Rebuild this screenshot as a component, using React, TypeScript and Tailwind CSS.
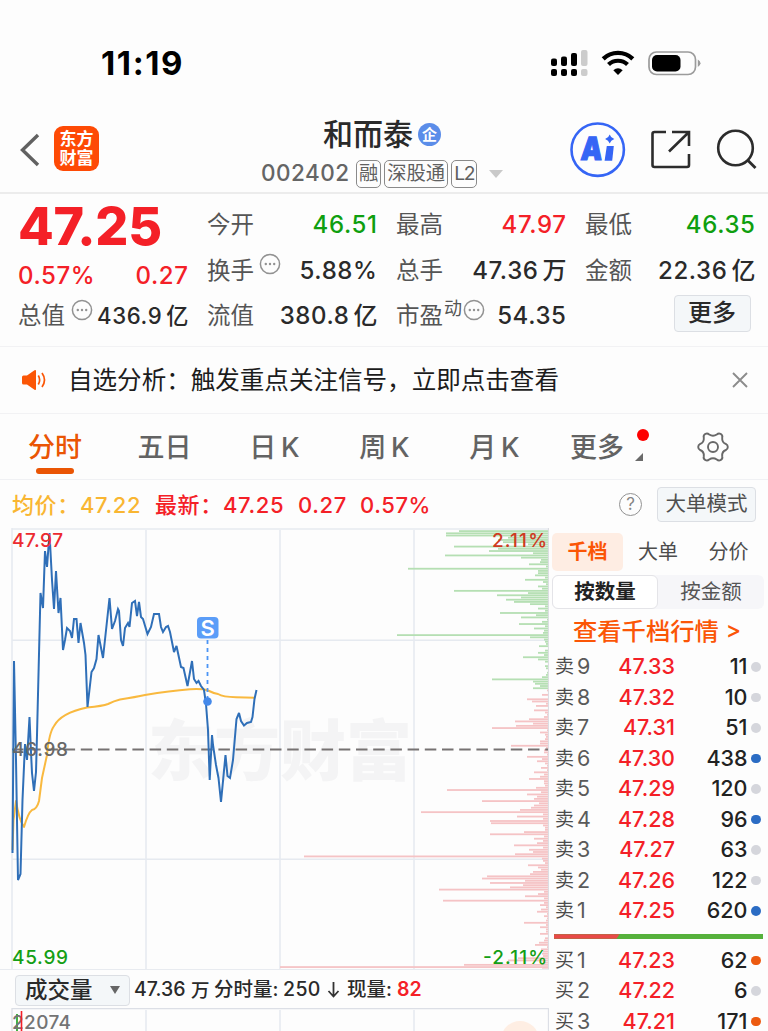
import type { ReactNode } from "react";

// bar lengths of the price distribution, one for each price step from the top
const DIST = [
  89, 102, 102, 40, 50, 45, 20, 94, 50, 59, 15, 103, 27, 7, 8, 19, 2, 140, 10, 10, 13, 3, 23, 5, 2,
  10, 6, 94, 20, 51, 27, 42, 34, 18, 3, 10, 3, 48, 12, 27, 1, 6, 29, 3, 14, 4, 5, 151, 18, 4, 3, 2,
  9, 0, 3, 10, 4, 25, 10, 3, 0, 3, 2, 0, 1, 2, 6, 56, 15, 13, 8, 15, 1, 0, 6, 0, 21, 16, 2, 12, 0,
  14, 3, 1, 4, 19, 33, 15, 32, 56, 1, 8, 3, 2, 3, 8, 8, 37, 2, 4, 4, 1, 21, 6, 11, 3, 1, 7, 1, 14,
  4, 8, 19, 4, 4, 3, 12, 101, 7, 21, 11, 14, 66, 9, 14, 17, 28, 127, 5, 31, 5, 58, 57, 5, 3, 3, 24,
  58, 4, 14, 5, 11, 34, 5, 19, 15, 33, 244, 6, 5, 3, 20, 10, 7, 15, 18, 61, 66, 23, 58, 25, 38, 109,
  4, 10, 23, 4, 105, 4, 8, 2, 7, 11, 1, 4, 1, 2, 24, 2, 8, 2, 2, 8, 0, 3, 4, 9, 13, 1, 7, 5, 6, 5,
  30, 40, 5, 84, 268, 6,
];
const GREEN_COUNT = 72;

const PRICE_LINE =
  "12.5,853 14,661 16,760 18,880 20.5,874 22.5,800 25,744 27,760 29.5,717 31,752 32,773 34,791 36,772 37,735 40.5,593 43,608 45,551 47,567 49.5,533 52,580 54,609 56,571 58.5,613 60.5,598 63,650 65,640 67,628 70,631 72,638 74,619 76.5,619 78.5,643 80.5,623 84,643 85.5,655 87.5,707 91.5,672 94,668 96.5,659 98.5,635 103,658 109.5,598 112,629 115,621 118,609 119,611 121,640 123,646 125,628 128,623 129.5,627 132,603 135,601 137,616 139,602 141,617 143,619 147.5,634 151,627 154,614 159,614 161,627 163,632 166,627 168,626 170,632 174,652 176.5,646 181,667 183.5,668 187.5,686 192,661 194,679 196.5,683 198.5,681 201,686 204,690 206,704 208,730 209.7,780 212,735 213,745 216,765 218.5,778 221,802 225.5,755 227.5,776 230,778 233,760 236.5,719 239,713 241,721 244,725.5 247,723 251,722 252.5,717 254.5,699 256.5,690";
const AVG_LINE =
  "M12.5 850L13.5 820L16 801Q19 820 24 827Q28 813 32 810Q37 809 39 801L42 778L47 755Q49 733 54 726Q61 713 87 707.5Q103 706 108 704Q114 701 120 699.5Q136 697 145 695Q170 691 190 689.3Q202 688.5 208 690.5Q214 693.5 218 694Q223 697 236 697.2L255 697.8";

type Level = { name: string; no: number; price: string; vol: number; dot: string };

const GREY = "bg-[#d5d6dc]";
const BLUE = "bg-[#2b6cc4]";
const ORANGE = "bg-[#ec5a10]";

const SELLS: Level[] = [
  { name: "卖", no: 9, price: "47.33", vol: 11, dot: GREY },
  { name: "卖", no: 8, price: "47.32", vol: 10, dot: GREY },
  { name: "卖", no: 7, price: "47.31", vol: 51, dot: GREY },
  { name: "卖", no: 6, price: "47.30", vol: 438, dot: BLUE },
  { name: "卖", no: 5, price: "47.29", vol: 120, dot: GREY },
  { name: "卖", no: 4, price: "47.28", vol: 96, dot: BLUE },
  { name: "卖", no: 3, price: "47.27", vol: 63, dot: GREY },
  { name: "卖", no: 2, price: "47.26", vol: 122, dot: GREY },
  { name: "卖", no: 1, price: "47.25", vol: 620, dot: BLUE },
];
const BUYS: Level[] = [
  { name: "买", no: 1, price: "47.23", vol: 62, dot: ORANGE },
  { name: "买", no: 2, price: "47.22", vol: 6, dot: GREY },
  { name: "买", no: 3, price: "47.21", vol: 171, dot: ORANGE },
];

const StatusBar = () => (
  <div className="flex h-[100px] shrink-0 items-center justify-between pt-[25px] pr-[67px] pl-[101px]">
    <span className="pt-px text-[33px] leading-none font-bold tracking-[1.6px] text-black">11:19</span>
    <svg width="152" height="30" viewBox="549 47 152 30" fill="none">
      <g fill="#000">
        <rect x="551" y="57.5" width="6" height="7.5" rx="2" />
        <rect x="561" y="55.5" width="6" height="9.5" rx="2" />
        <rect x="571" y="52" width="6" height="13" rx="2" />
        <rect x="551" y="68" width="6" height="7" rx="2" />
        <rect x="561" y="68" width="6" height="7" rx="2" />
        <rect x="571" y="68" width="6" height="7" rx="2" />
      </g>
      <rect x="581" y="49" width="6.5" height="16" rx="2" fill="#ccc" />
      <rect x="581" y="68" width="6.5" height="7" rx="2" fill="#ccc" />
      <path d="M603.2 57.8A21.5 21.5 0 0 1 632.8 57.8" stroke="#000" strokeWidth="4.4" />
      <path d="M608.5 63.6A13.7 13.7 0 0 1 627.5 63.6" stroke="#000" strokeWidth="4.2" />
      <path d="M613.3 69.2Q618 65.2 622.7 69.2L618 74Z" fill="#000" />
      <rect x="649" y="51" width="46.5" height="22.5" rx="7.5" stroke="#9b9b9b" strokeWidth="1.7" />
      <rect x="652" y="54" width="28.5" height="16.5" rx="5" fill="#000" />
      <path d="M697.8 58.5Q700.5 60 700.5 62.2Q700.5 64.5 697.8 66Z" fill="#9b9b9b" />
    </svg>
  </div>
);

const Tag = ({ children }: { children: ReactNode }) => (
  <span className="flex h-[28px] items-center rounded-[5px] border-[1.5px] border-[#8a8a8a] px-[2px] text-[19.3px] leading-none text-[#606060]">
    {children}
  </span>
);

const Header = () => (
  <div className="flex h-[94px] shrink-0 items-start border-b-2 border-[#ececec]">
    <svg className="mt-[32px] ml-[19px]" width="22" height="36" viewBox="0 0 22 36" fill="none">
      <path d="M19 3L3.5 18L19 33" stroke="#616161" strokeWidth="3.4" />
    </svg>
    <div className="mt-[26px] ml-[13px] flex size-[45px] flex-col items-center justify-center rounded-[9px] bg-[#fe4a05] text-[17px] leading-[19px] font-bold text-white">
      <span>东方</span>
      <span>财富</span>
    </div>
    <div className="ml-[162px] flex w-[250px] flex-col">
      <div className="mt-[18px] flex h-[32px] items-center pl-[62px]">
        <span className="text-[30px] leading-none font-medium whitespace-nowrap text-[#2a2a2a]">和而泰</span>
        <span className="ml-[5px] flex size-[23px] items-center justify-center rounded-full bg-[#5b8de9] text-[15px] leading-none font-bold text-white">
          企
        </span>
      </div>
      <div className="mt-[9px] flex h-[29px] items-center">
        <span className="w-[95px] text-[22.5px] leading-none font-medium tracking-[0.5px] text-[#656565]">002402</span>
        <Tag>融</Tag>
        <span className="w-[3px]" />
        <Tag>深股通</Tag>
        <span className="w-[3px]" />
        <Tag>
          <span className="tracking-[-1.3px]">L2</span>
        </Tag>
        <svg className="ml-[12px]" width="14" height="8" viewBox="0 0 14 8">
          <path d="M0 0H14L7 8Z" fill="#c9c9c9" />
        </svg>
      </div>
    </div>
    <svg className="mt-[20px] ml-[58px]" width="198" height="60" viewBox="569 120 198 60" fill="none">
      <circle cx="597.7" cy="149.7" r="26.2" stroke="#3565f5" strokeWidth="2.6" />
      <text
        x="581"
        y="160.5"
        fontSize="32"
        fontWeight="900"
        fill="#3565f5"
        stroke="#3565f5"
        strokeWidth="1.2"
        transform="skewX(-4) translate(10.5 0)"
        textLength="21.5"
        lengthAdjust="spacingAndGlyphs"
      >
        A
      </text>
      <path d="M606.8 146H613.8L612.2 160.8H604.6Z" fill="#3565f5" />
      <path d="M609.7 134.5Q610.8 138 614.3 139Q610.8 140 609.7 143.5Q608.6 140 605.1 139Q608.6 138 609.7 134.5Z" fill="#3565f5" />
      <path d="M666 132H654.5Q652.5 132 652.5 134V165Q652.5 167 654.5 167H687Q689 167 689 165V154M672 132H689V146M689 132L669 151.5" stroke="#2c2c2c" strokeWidth="2.6" />
      <circle cx="735.5" cy="148" r="17.3" stroke="#2c2c2c" strokeWidth="2.6" />
      <path d="M747.5 160L755.5 168" stroke="#2c2c2c" strokeWidth="2.8" />
    </svg>
  </div>
);

const Dots = () => (
  <svg width="22" height="22" viewBox="0 0 22 22" fill="none" className="-mt-[13px] shrink-0">
    <circle cx="11" cy="11" r="9.6" stroke="#929292" strokeWidth="1.5" />
    <g fill="#929292">
      <circle cx="6.8" cy="11" r="1.2" />
      <circle cx="11" cy="11" r="1.2" />
      <circle cx="15.2" cy="11" r="1.2" />
    </g>
  </svg>
);

type CellProps = { label: ReactNode; value: string; unit?: string; color?: string; size?: string };

const Cell = ({ label, value, unit, color = "text-[#2a2a2a]", size = "text-[24px]" }: CellProps) => (
  <div className="flex h-[45.7px] items-center justify-between whitespace-nowrap">
    <span className="flex items-center text-[23.5px] leading-none text-[#555]">{label}</span>
    <span className={`flex leading-none font-medium tracking-[0.6px] ${size} ${color}`}>
      {value}
      {unit && <span className="ml-[4px] tracking-normal">{unit}</span>}
    </span>
  </div>
);

const Quote = () => (
  <div className="flex h-[153px] shrink-0 gap-[18.5px] border-b-[1.5px] border-[#f2f2f4] pt-[8px] pl-[18px]">
    <div className="w-[170.5px]">
      <div className="flex h-[49px] items-center text-[52px] leading-none font-extrabold tracking-[-0.3px] text-[#f42027]">
        47.25
      </div>
      <div className="flex h-[42.4px] items-center justify-between pt-[8px] text-[24px] leading-none font-medium tracking-[0.6px] text-[#f42027]">
        <span>0.57%</span>
        <span>0.27</span>
      </div>
      <Cell label={<>总值<span className="w-[6px]" /><Dots /></>} value="436.9" unit="亿" size="text-[22.2px]" />
    </div>
    <div className="w-[170.5px]">
      <Cell label="今开" value="46.51" color="text-[#0f9f0f]" />
      <Cell label={<>换手<span className="w-[5px]" /><Dots /></>} value="5.88%" />
      <Cell label="流值" value="380.8" unit="亿" />
    </div>
    <div className="w-[170.5px]">
      <Cell label="最高" value="47.97" color="text-[#f42027]" />
      <Cell label="总手" value="47.36" unit="万" />
      <Cell label={<>市盈<span className="-mt-[14px] mr-px ml-px text-[18px]">动</span><Dots /></>} value="54.35" />
    </div>
    <div className="w-[170.5px]">
      <Cell label="最低" value="46.35" color="text-[#0f9f0f]" />
      <Cell label="金额" value="22.36" unit="亿" />
      <div className="flex h-[40px] items-center justify-end pr-[5px]">
        <button className="h-[37px] w-[77px] rounded-[4px] border border-[#dcdfe4] bg-[#f4f7f9] text-[24px] leading-none font-medium text-[#2a2a2a]">
          更多
        </button>
      </div>
    </div>
  </div>
);

const Notice = () => (
  <div className="flex h-[67px] shrink-0 items-center border-b-[1.5px] border-[#f2f2f4] pr-[19px] pl-[21px]">
    <svg width="26" height="22" viewBox="0 0 26 22" fill="none">
      <path d="M1 8Q1 6.5 2.5 6.5H6L13.5 1.2Q15 .5 15 2V20Q15 21.5 13.5 20.7L6 15.5H2.5Q1 15.5 1 14Z" fill="#fb5606" />
      <path d="M17.3 6.5Q20 11 17.3 15.5M21 4Q26 11 21 18" stroke="#fb5606" strokeWidth="1.7" />
    </svg>
    <span className="ml-[21px] pt-px text-[24.55px] leading-none whitespace-nowrap text-[#1c1c1c]">
      自选分析：触发重点关注信号，立即点击查看
    </span>
    <svg className="ml-auto" width="18" height="18" viewBox="0 0 18 18">
      <path d="M2 2L16 16M16 2L2 16" stroke="#8c8c8c" strokeWidth="1.9" />
    </svg>
  </div>
);

const Tabs = () => (
  <div className="flex h-[66px] shrink-0 items-center border-b-[1.5px] border-[#f0f1f4] pt-px text-[27px] leading-none font-medium whitespace-nowrap text-[#636363]">
    <div className="flex w-[110px] flex-col items-center pt-[14px] text-[#ea5504]">
      分时
      <span className="mt-[6.5px] h-[6px] w-[38px] rounded-full bg-[#ea5504]" />
    </div>
    <div className="w-[109px] pt-px text-center">五日</div>
    <div className="w-[111px] pt-px text-center [word-spacing:-2.5px]">日 K</div>
    <div className="w-[109px] pt-px text-center [word-spacing:-2.5px]">周 K</div>
    <div className="w-[111px] pt-px text-center [word-spacing:-2.5px]">月 K</div>
    <div className="flex w-[146px] items-center pt-px pl-[20px]">
      更多
      <svg className="-mt-[3px] ml-[10px]" width="18" height="36" viewBox="0 0 18 36">
        <circle cx="9" cy="7" r="6" fill="#fd0101" />
        <path d="M9 25V33H1Z" fill="#6a6a6a" />
      </svg>
    </div>
    <svg width="34" height="34" viewBox="-17 -17 34 34" fill="none" stroke="#686868" strokeWidth="1.9">
      <path
        d="M-7.5 -13.2Q-5.5 -14 -3.8 -12.5Q0 -10 3.8 -12.5Q5.5 -14 7.5 -13.2Q10 -11.7 9.2 -9.2Q8.8 -4.4 13 -3Q14.8 -2 14.8 0Q14.8 2 13 3Q8.8 4.4 9.2 9.2Q10 11.7 7.5 13.2Q5.5 14 3.8 12.5Q0 10 -3.8 12.5Q-5.5 14 -7.5 13.2Q-10 11.7 -9.2 9.2Q-8.8 4.4 -13 3Q-14.8 2 -14.8 0Q-14.8 -2 -13 -3Q-8.8 -4.4 -9.2 -9.2Q-10 -11.7 -7.5 -13.2Z"
        strokeLinejoin="round"
      />
      <circle r="5" />
    </svg>
  </div>
);

const InfoRow = () => (
  <div className="flex h-[48px] shrink-0 items-center pt-px pr-[12px] pl-[12px] text-[22px] leading-none font-medium tracking-[0.6px] whitespace-nowrap text-[#f42027]">
    <span className="w-[68px] text-[#f9b632]">均价：</span>
    <span className="w-[75px] text-[#f9b632]">47.22</span>
    <span className="w-[68px]">最新：</span>
    <span className="w-[75px]">47.25</span>
    <span className="w-[62px]">0.27</span>
    <span>0.57%</span>
    <span className="ml-auto flex size-[23px] items-center justify-center rounded-full border-[1.5px] border-[#929292] text-[17px] font-normal tracking-normal text-[#858585]">
      ?
    </span>
    <button className="ml-[15px] h-[35px] w-[99px] rounded-[4px] border border-[#dcdfe4] bg-[#f4f7f9] text-[20.5px] leading-none font-normal tracking-normal text-[#505050]">
      大单模式
    </button>
  </div>
);

const Chart = () => (
  <svg width="549" height="441" viewBox="0 528 549 441" fill="none" className="block shrink-0">
    <g stroke="#e6eaf0" strokeWidth="1.6">
      <path d="M12 529H549M12 640.3H548M12 859.3H548M12 528V969" />
      <path d="M146 530V969M280 530V969M414 530V969" />
    </g>
    <text x="148" y="775" fontSize="66" fontWeight="900" fill="#f4f4f5" textLength="264">
      东方财富
    </text>
    {DIST.map((w, i) => (
      <rect
        key={i}
        x={548 - w}
        y={530.2 + i * 2.213}
        width={w}
        height="1.8"
        fill={i < GREEN_COUNT ? "#b5dfb3" : "#f5c3c5"}
      />
    ))}
    <path d="M548.5 528V969" stroke="#dcdde3" strokeWidth="1.2" />
    <path d="M12 749.5H548" stroke="#767272" strokeWidth="2" strokeDasharray="11.5 5.7" />
    <path d={AVG_LINE} stroke="#f9b93f" strokeWidth="2" strokeLinejoin="round" />
    <polyline points={PRICE_LINE} stroke="#2f6fb8" strokeWidth="2" strokeLinejoin="miter" strokeMiterlimit="3" />
    <path d="M207.5 640V698" stroke="#4c95f5" strokeWidth="1.8" strokeDasharray="4 4" />
    <circle cx="207.5" cy="701.5" r="4.3" fill="#4489ea" />
    <rect x="197" y="617" width="21.5" height="21.5" rx="4" fill="#5b9df8" />
    <g fontWeight="550" fontSize="19">
      <text x="207.7" y="635.5" textAnchor="middle" fontSize="22" fontWeight="600" fill="#fff">S</text>
      <text x="12" y="547.3" fill="#ec2a30" textLength="51">47.97</text>
      <text x="12" y="756" fill="#686868" textLength="56">46.98</text>
      <text x="12" y="964" fill="#159f15" textLength="56">45.99</text>
      <text x="492" y="547.3" fill="#cf3a22" textLength="55">2.11%</text>
      <text x="483" y="964" fill="#159f15" textLength="64">-2.11%</text>
    </g>
  </svg>
);

const VolumeBar = () => (
  <>
    <div className="flex h-[39px] shrink-0 items-center border-t-[1.5px] border-[#e8ebf0] pt-[2px] pl-[15px] text-[19.5px] leading-none font-medium whitespace-nowrap text-[#2a2a2a]">
      <button className="flex h-[31px] w-[115px] items-center rounded-[4px] border border-[#dcdfe4] bg-[#f4f7f9] pl-[9px] text-[22.5px] leading-none font-medium">
        成交量
        <svg className="ml-[17px]" width="10" height="8" viewBox="0 0 10 8">
          <path d="M0 0H10L5 8Z" fill="#666" />
        </svg>
      </button>
      <span className="ml-[4px] w-[57px]">47.36</span>
      <span className="w-[23px] text-[18.5px]">万</span>
      <span className="w-[69px]">分时量:</span>
      <span className="w-[44px] tracking-[0.4px]">250</span>
      <svg width="13" height="18" viewBox="0 0 13 18" fill="none">
        <path d="M6.5 1V15M1.5 10L6.5 15.5L11.5 10" stroke="#333" strokeWidth="1.8" />
      </svg>
      <span className="ml-[7px] w-[50px]">现量:</span>
      <span className="font-semibold text-[#f42027]">82</span>
    </div>
    <svg width="549" height="23" viewBox="0 1008 549 23" fill="none" className="block shrink-0">
      <path d="M12 1008.6H549M12 1008V1031M548.5 1008V1031" stroke="#dcdfe6" strokeWidth="1.3" />
      <path d="M146 1010V1031M280 1010V1031M414 1010V1031" stroke="#e6eaf0" strokeWidth="1.6" />
      <circle cx="520" cy="1040" r="19" fill="#feeee3" />
      <path d="M17 1014V1031" stroke="#159f15" strokeWidth="1.6" />
      <text x="12" y="1029" fontSize="19" fontWeight="500" fill="#747474" textLength="59">
        22074
      </text>
      <path d="M21.5 1011V1031" stroke="#f42027" strokeWidth="1.6" />
    </svg>
  </>
);

const LevelRow = ({ row }: { row: Level }) => (
  <div className="flex h-[30.5px] items-center leading-none whitespace-nowrap">
    <span className="w-[22px] text-[19px] text-[#4c4c4c]">{row.name}</span>
    <span className="w-[20px] text-[21.5px] text-[#5a5a5a]">{row.no}</span>
    <span className="w-[78px] text-right text-[21.5px] font-medium text-[#f42027]">{row.price}</span>
    <span className="w-[72.5px] text-right text-[21.5px] font-[550] text-[#222]">{row.vol}</span>
    <span className={`ml-[3.5px] size-[9.5px] rounded-full ${row.dot}`} />
  </div>
);

const OrderBook = () => (
  <div className="w-[219px] overflow-hidden pt-[5px] pl-[3px]">
    <div className="flex h-[38px] items-center text-[20px] leading-none text-[#4c4c4c]">
      <span className="flex h-[38px] w-[71px] items-center justify-center rounded-[5px] bg-[#feede3] font-bold text-[#fb5606]">
        千档
      </span>
      <span className="w-[70px] text-center">大单</span>
      <span className="w-[71px] text-center">分价</span>
    </div>
    <div className="mt-[4px] flex h-[34px] w-[212px] items-center rounded-[6px] bg-[#f6f6f9] text-[20.5px] leading-none text-[#555]">
      <span className="flex h-[34px] w-[106px] items-center justify-center rounded-[6px] border border-[#e4e4e8] bg-white font-bold text-[#222]">
        按数量
      </span>
      <span className="w-[106px] text-center">按金额</span>
    </div>
    <div className="flex h-[42.7px] items-center pt-px pl-[21px] text-[24.3px] leading-none font-medium whitespace-nowrap text-[#fb5606]">
      查看千档行情
      <span className="ml-[7px] text-[23px]">&gt;</span>
    </div>
    <div className="pl-[3px]">
      {SELLS.map((row) => (
        <LevelRow key={row.no} row={row} />
      ))}
    </div>
    <div className="mt-[8px] mb-[6.5px] ml-[1.5px] flex h-[4.5px] w-[209px] bg-[#56b13c]">
      <span className="w-[66px] bg-[#e84a48] [clip-path:polygon(0_0,100%_0,calc(100%-3px)_100%,0_100%)]" />
    </div>
    <div className="pl-[3px]">
      {BUYS.map((row) => (
        <LevelRow key={row.no} row={row} />
      ))}
    </div>
  </div>
);

const App = () => {
  return (
    <div className="flex h-[1031px] w-[768px] flex-col overflow-hidden bg-[#fdfdfd] font-[Inter,'Noto_Sans_CJK_SC',sans-serif]">
      <StatusBar />
      <Header />
      <Quote />
      <Notice />
      <Tabs />
      <InfoRow />
      <div className="flex min-h-0 flex-1">
        <div className="flex w-[549px] shrink-0 flex-col overflow-hidden">
          <Chart />
          <VolumeBar />
        </div>
        <OrderBook />
      </div>
    </div>
  );
};

export default App;
